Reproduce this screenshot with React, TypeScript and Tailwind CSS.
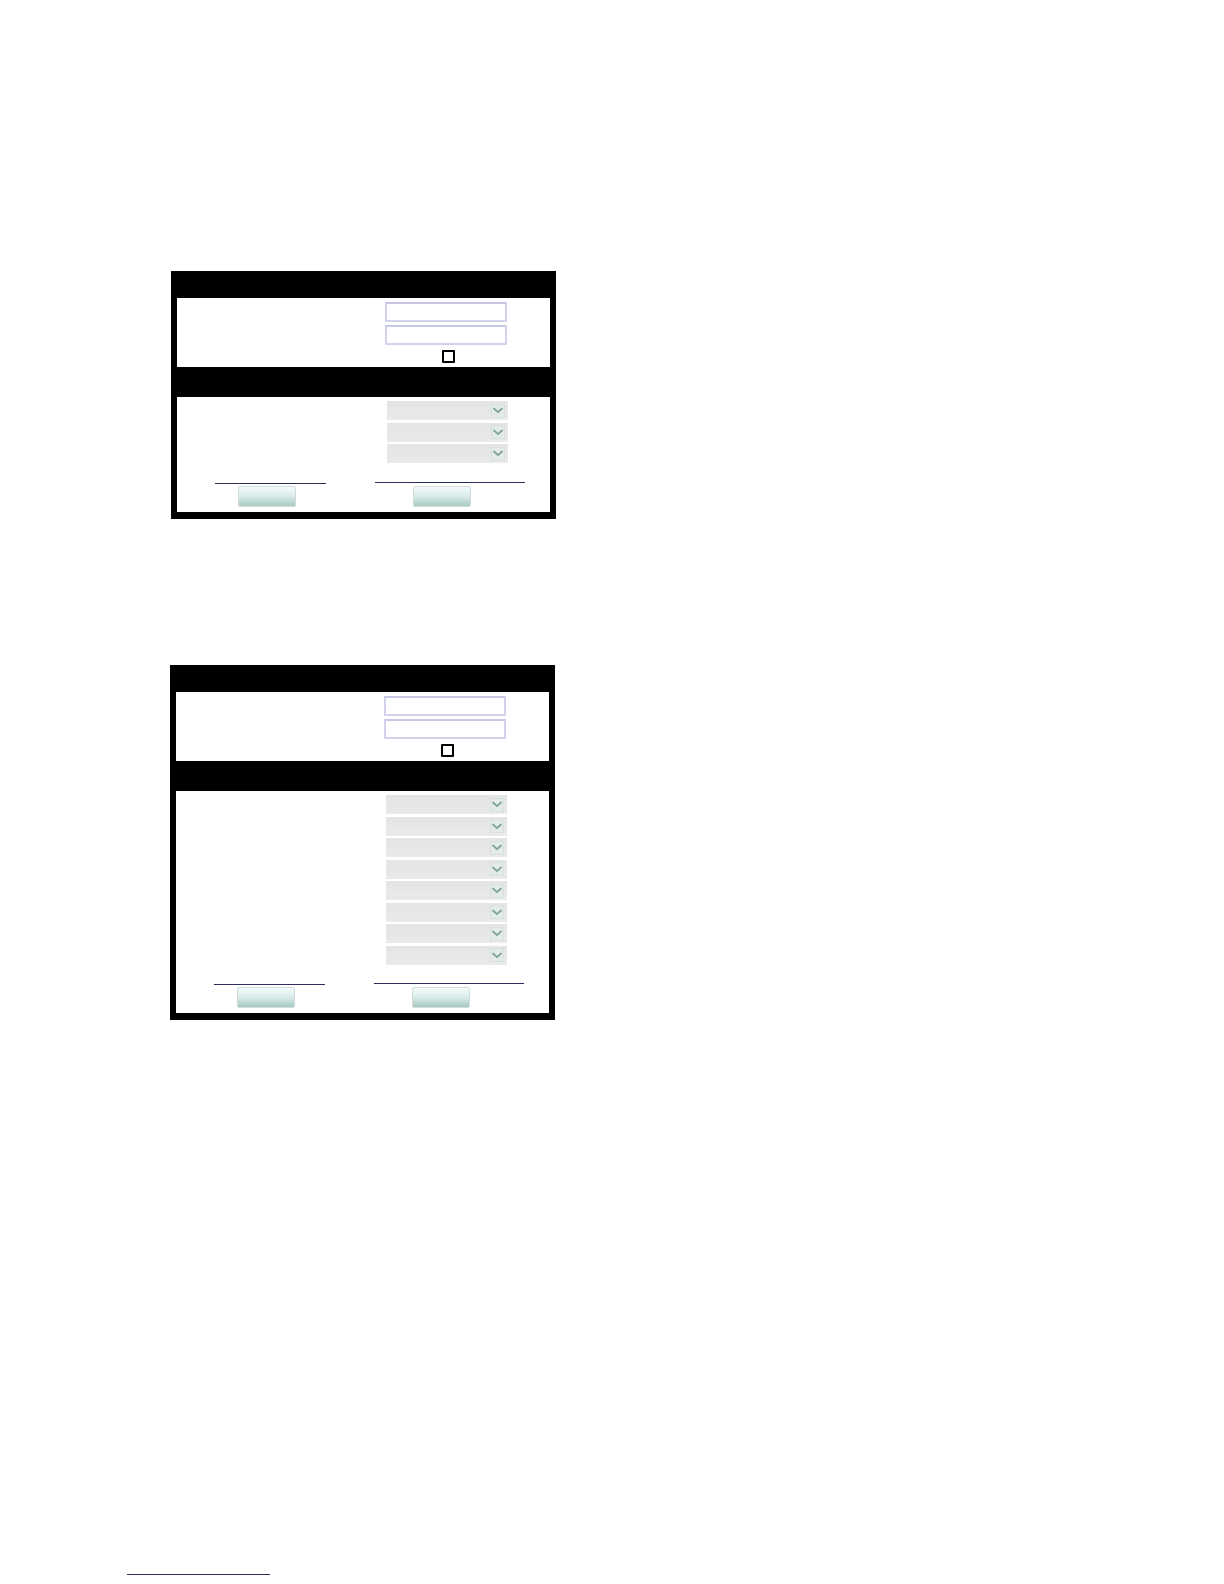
import React from "react"

const TextBox: React.FC<{ className?: string }> = ({ className = "" }) => (
  <div
    className={`h-[20px] w-[122px] border-2 border-[#d2d2ec] border-t-[#c6c6e6] bg-white ${className}`}
  />
)

const Select: React.FC = () => (
  <div className="flex h-[19px] w-[121px] items-center justify-end bg-gradient-to-b from-[#e4e4e4] to-[#eaeaea] pr-[3px]">
    <div className="flex h-[14px] w-[14px] items-center justify-center border border-[#d6e0dc] bg-[#e2ebe7]">
      <svg width="10" height="7" viewBox="0 0 10 7" fill="none">
        <path d="M1 1.5 L5 5.2 L9 1.5" stroke="#7fa39b" strokeWidth="1.8" strokeLinecap="round" strokeLinejoin="round" />
      </svg>
    </div>
  </div>
)

const Button: React.FC<{ className?: string }> = ({ className = "" }) => (
  <div
    className={`h-[21px] w-[58px] rounded-[2px] border border-[#d3dcda] bg-gradient-to-b from-[#f4fcfb] via-[#d8ebe8] to-[#a7c9c3] ${className}`}
  />
)

const Panel: React.FC<{ selects: number; lineGap: number; className?: string }> = ({
  selects,
  lineGap,
  className = "",
}) => (
  <div className={`w-[385px] bg-black px-[6px] pb-[7px] ${className}`}>
    {/* top band */}
    <div className="h-[27px]" />

    {/* login fields */}
    <div className="flex h-[69px] bg-white">
      <div className="w-[198px]" />
      <div className="flex flex-col pt-[4px]">
        <TextBox className="ml-[10px]" />
        <TextBox className="ml-[10px] mt-[3px]" />
        <div className="ml-[67px] mt-[5px] h-[13px] w-[13px] rounded-[1px] border-2 border-black bg-white" />
      </div>
    </div>

    {/* middle band */}
    <div className="h-[30px]" />

    {/* options */}
    <div className="bg-white pt-[4px] pb-[5px]">
      <div className="flex">
        <div className="w-[198px]" />
        <div className="ml-[12px] flex flex-col gap-[2.5px]">
          {Array.from({ length: selects }).map((_, i) => (
            <Select key={i} />
          ))}
        </div>
      </div>
      <div className="flex items-start" style={{ marginTop: lineGap }}>
        <div className="flex w-[198px] flex-col">
          <div className="ml-[38px] mt-px h-px w-[111px] bg-[#2e2e5e]" />
          <Button className="ml-[61px] mt-[2px]" />
        </div>
        <div className="flex flex-col">
          <div className="h-px w-[150px] bg-[#2e2e5e]" />
          <Button className="ml-[38px] mt-[3px] w-[57px]" />
        </div>
      </div>
    </div>
  </div>
)

export default function App() {
  return (
    <div className="min-h-[1584px] w-[1224px] bg-white pt-[271px] font-['Liberation_Sans',Arial,sans-serif]">
      <Panel selects={3} lineGap={19} className="ml-[171px]" />
      <Panel selects={8} lineGap={18} className="ml-[170px] mt-[146px]" />
      <div className="ml-[127px] mt-[554px] h-px w-[143px] bg-[#2e2e5e]" />
    </div>
  )
}
